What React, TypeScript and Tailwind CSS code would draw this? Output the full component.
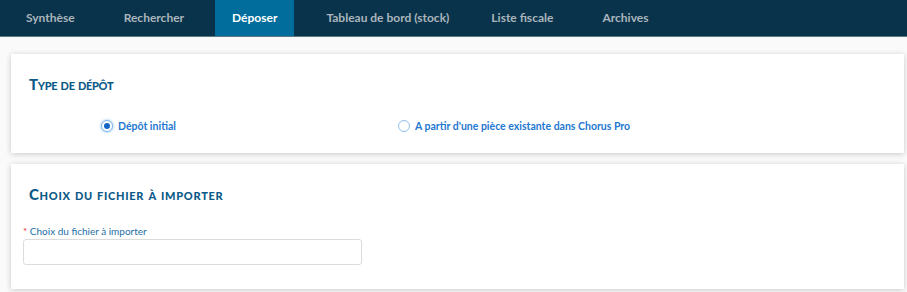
import React from 'react';

// per-tab left margin to follow the reference spacing
const tabs = [
  { label: 'Synthèse', ml: 'ml-0' },
  { label: 'Rechercher', ml: 'ml-[15px]' },
  { label: 'Déposer', ml: 'ml-[14px]' },
  { label: 'Tableau de bord (stock)', ml: 'ml-[15px]' },
  { label: 'Liste fiscale', ml: 'ml-[8px]' },
  { label: 'Archives', ml: 'ml-[15px]' },
];

const Radio = ({ checked, label }: { checked?: boolean; label: string }) => (
  <label className="flex items-center gap-[5px] h-[14px]">
    <span
      className={`flex items-center justify-center w-[12px] h-[12px] rounded-full border bg-white ${
        checked ? 'border-[#7db5e6] shadow-[0_0_2px_1px_rgba(90,160,230,0.35)]' : 'border-[#8fc0ec]'
      }`}
    >
      {checked && <span className="w-[6px] h-[6px] rounded-full bg-[#1565c8]" />}
    </span>
    <span className="text-[10.5px] leading-[14px] font-bold text-[#1f78d1]">{label}</span>
  </label>
);

const Title = ({ children, wide }: { children: React.ReactNode; wide?: boolean }) => (
  <h2
    className={`text-[15px] leading-[18px] font-black text-[#0b5a88] [font-variant:small-caps] ${
      wide ? 'tracking-[0.7px]' : 'tracking-[-0.3px]'
    }`}
  >
    {children}
  </h2>
);

export default function App() {
  return (
    <div className="w-[907px] h-[292px] bg-[#fafafa] font-['Lato','Open_Sans',sans-serif] overflow-hidden">
      <nav className="flex h-[37px] bg-[#09334a] border-b border-[#5b7887] pl-[9px]">
        {tabs.map((t) => (
          <div
            key={t.label}
            className={`flex items-center px-[17px] text-[12px] font-bold ${t.ml} ${
              t.label === 'Déposer' ? 'bg-[#006d9c] text-white' : 'text-[#aab5bd]'
            }`}
          >
            {t.label}
          </div>
        ))}
      </nav>

      <div className="flex flex-col gap-[11px] pt-[17px] pl-[11px] pr-[3px]">
        <section className="bg-white shadow-[0_1px_6px_rgba(0,0,0,0.2)] pt-[21px] pb-[20px] px-[18px]">
          <Title>Type de dépôt</Title>
          <div className="flex mt-[26px] pl-[72px]">
            <div className="w-[297px]">
              <Radio checked label="Dépôt initial" />
            </div>
            <Radio label="A partir d'une pièce existante dans Chorus Pro" />
          </div>
        </section>

        <section className="bg-white shadow-[0_1px_6px_rgba(0,0,0,0.2)] pt-[21px] pb-[24px] px-[12px]">
          <div className="pl-[6px]">
            <Title wide>Choix du fichier à importer</Title>
          </div>
          <div className="mt-[22px] text-[10px] leading-[12px] text-[#1e6fa6]">
            <span className="text-[#e53935]">* </span>Choix du fichier à importer
          </div>
          <input
            type="text"
            className="block mt-[2px] w-[339px] h-[26px] border border-[#dcdcdc] rounded-[3px] bg-white outline-none"
          />
        </section>
      </div>
    </div>
  );
}
